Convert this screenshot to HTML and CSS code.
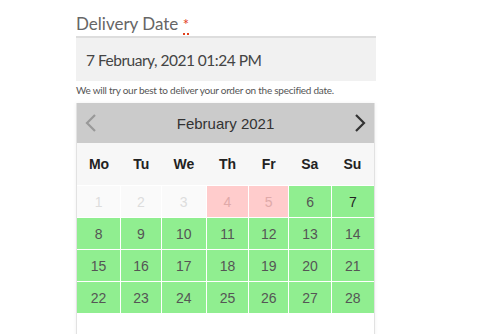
FILE: index.html
```html
<!DOCTYPE html>
<html lang="en">
<head>
    <meta charset="UTF-8">
    <title>Delivery Date</title>
    <link rel="stylesheet" href="styles.css">
</head>
<body>
    <div class="field">
        <label class="field-label">Delivery Date <abbr class="required" title="required">*</abbr></label>
        <div class="date-input">7 February, 2021 01:24 PM</div>
        <p class="hint">We will try our best to deliver your order on the specified date.</p>

        <!-- date picker -->
        <div class="picker">
            <div class="picker-head">
                <span class="nav nav-prev">
                    <svg width="12" height="20" viewBox="0 0 12 20"><polyline points="10,2 2,10 10,18" fill="none" stroke="#999" stroke-width="2.2"/></svg>
                </span>
                <span class="month">February 2021</span>
                <span class="nav nav-next">
                    <svg width="12" height="20" viewBox="0 0 12 20"><polyline points="2,2 10,10 2,18" fill="none" stroke="#333" stroke-width="2.2"/></svg>
                </span>
            </div>
            <div class="weekdays">
                <span>Mo</span><span>Tu</span><span>We</span><span>Th</span><span>Fr</span><span>Sa</span><span>Su</span>
            </div>
            <div class="days">
                <span class="day past">1</span>
                <span class="day past">2</span>
                <span class="day past">3</span>
                <span class="day blocked">4</span>
                <span class="day blocked">5</span>
                <span class="day open">6</span>
                <span class="day open today">7</span>
                <span class="day open">8</span>
                <span class="day open">9</span>
                <span class="day open">10</span>
                <span class="day open">11</span>
                <span class="day open">12</span>
                <span class="day open">13</span>
                <span class="day open">14</span>
                <span class="day open">15</span>
                <span class="day open">16</span>
                <span class="day open">17</span>
                <span class="day open">18</span>
                <span class="day open">19</span>
                <span class="day open">20</span>
                <span class="day open">21</span>
                <span class="day open">22</span>
                <span class="day open">23</span>
                <span class="day open">24</span>
                <span class="day open">25</span>
                <span class="day open">26</span>
                <span class="day open">27</span>
                <span class="day open">28</span>
            </div>
            <div class="picker-foot"></div>
        </div>
    </div>
</body>
</html>
```

FILE: styles.css
```css
* {
    margin: 0;
    padding: 0;
    box-sizing: border-box;
}
body {
    background: #fff;
    font-family: Lato, "Open Sans", sans-serif;
    overflow: hidden;
}
.field {
    width: 300px;
    margin: 13px 0 0 76px;
}
.field-label {
    display: block;
    font-size: 17px;
    line-height: 22px;
    color: #666;
    margin-bottom: 1px;
}
.required {
    color: #e2401c;
    text-decoration: none;
    border-bottom: 2px dotted #e2401c;
    font-size: 15px;
}
.date-input {
    height: 45px;
    border-top: 2px solid #ddd;
    background: #f1f1f1;
    padding: 0 10px;
    display: flex;
    align-items: center;
    font-size: 15.5px;
    letter-spacing: -0.5px;
    color: #444;
}
.hint {
    font-size: 10px;
    letter-spacing: -0.25px;
    line-height: 16px;
    color: #555;
    margin-top: 1px;
    white-space: nowrap;
}
.picker {
    width: 299px;
    margin-top: 5px;
    border-left: 1px solid #e2e2e2;
    border-right: 1px solid #e2e2e2;
    box-shadow: 0 0 4px rgba(0, 0, 0, 0.06);
    font-family: "Liberation Sans", Arial, sans-serif;
}
.picker-head {
    height: 40px;
    background: #cbcbcb;
    display: flex;
    align-items: center;
    justify-content: space-between;
    padding: 0 8px 0 8px;
}
.nav {
    display: flex;
}
.month {
    font-size: 15px;
    color: #333;
}
.weekdays {
    height: 42px;
    background: #f7f7f7;
    display: grid;
    grid-template-columns: 44fr 40fr 45fr 42fr 40fr 42fr 43fr;
    align-items: center;
    text-align: center;
    font-size: 14px;
    font-weight: bold;
    color: #222;
}
.days {
    display: grid;
    grid-template-columns: 44fr 40fr 45fr 42fr 40fr 42fr 43fr;
    grid-auto-rows: 31px;
    gap: 1px;
    padding-top: 1px;
    background: #fff;
}
.day {
    display: flex;
    align-items: center;
    justify-content: center;
    font-size: 14px;
    color: #555;
}
.day.past {
    background: #fafafa;
    color: #ddd;
}
.day.blocked {
    background: #ffcccc;
    color: #e0a9a9;
}
.day.open {
    background: #90ee90;
}
.day.today {
    color: #222;
}
.picker-foot {
    height: 40px;
}
```
